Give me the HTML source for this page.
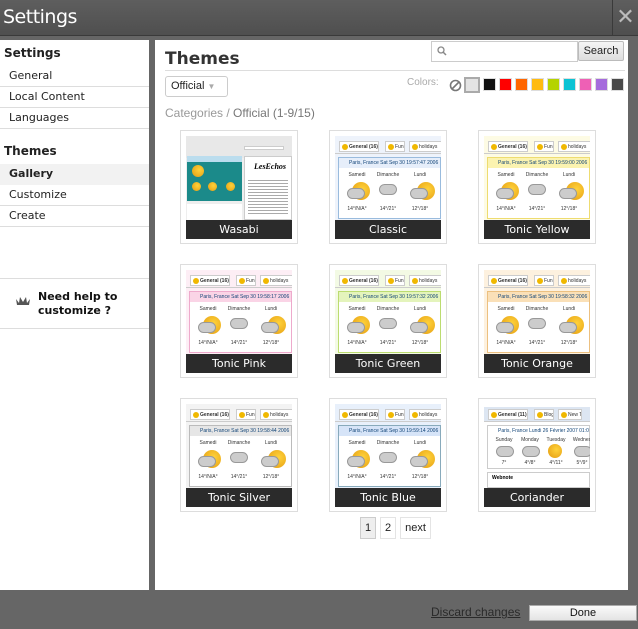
<!DOCTYPE html>
<html><head><meta charset="utf-8"><style>
*{margin:0;padding:0;box-sizing:border-box}
body{width:638px;height:629px;overflow:hidden;background:#666;font-family:"Liberation Sans","DejaVu Sans",sans-serif;position:relative}
.top{position:absolute;left:0;top:0;width:638px;height:36px;background:linear-gradient(#5e5e5e,#4f4f4f);border-bottom:1px solid #3a3a3a}
.top h1{position:absolute;left:3px;top:6px;color:#fff;font-size:19px;font-weight:normal;font-family:"DejaVu Sans",sans-serif;letter-spacing:-0.5px}
.close{position:absolute;left:612px;top:0;width:26px;height:36px;border-left:1px solid #3a3a3a;color:#bbb;font-size:22px;text-align:center;line-height:34px}
.side{position:absolute;left:0;top:40px;width:149px;height:550px;background:#fff}
.div{position:absolute;left:149px;top:40px;width:6px;height:550px;background:#666}
.main{position:absolute;left:155px;top:40px;width:473px;height:550px;background:#fff}
.side .h{font-size:12px;font-weight:bold;color:#222;padding-left:4px;font-family:"DejaVu Sans",sans-serif}
.side .it{font-size:11px;color:#222;padding-left:9px;height:21px;line-height:20px;border-bottom:1px solid #ddd;font-family:"DejaVu Sans",sans-serif}
.ab{position:absolute}
.thumb{position:absolute;width:118px;height:114px;border:1px solid #ddd;background:#fff}
.thumb .img{position:absolute;left:5px;top:5px;width:106px;height:84px;overflow:hidden;background:#fff}
.thumb .lab{position:absolute;left:5px;top:89px;width:106px;height:19px;background:#2b2b2b;color:#fff;font-size:11px;text-align:center;line-height:19px;font-family:"DejaVu Sans",sans-serif}
.tabs{position:absolute;left:0;top:3px;width:106px;height:15px;border-bottom:1px solid #ccc}
.tab{position:absolute;top:2px;height:11px;border:1px solid #ccc;background:#fff;font-size:5px;line-height:10px;padding-left:9px;color:#333;white-space:nowrap;overflow:hidden}
.tab:before{content:"";position:absolute;left:2px;top:2px;width:6px;height:6px;border-radius:3px;background:#f0b800}
.pan{position:absolute;left:3px;top:21px;width:103px;height:62px;border:1px solid #bbb;background:#fff}
.ph{height:10px;font-size:5px;color:#147;line-height:10px;padding-left:10px;white-space:nowrap;overflow:hidden}
.d{position:absolute;top:14px;width:24px;font-size:5px;text-align:center;color:#333}
.sun{position:absolute;top:24px;width:18px;height:18px;border-radius:9px;background:radial-gradient(circle at 60% 40%,#ffd23a,#e39a10)}
.cl{position:absolute;top:30px;width:18px;height:11px;border-radius:6px;background:#ccc;border:1px solid #999}
.t{position:absolute;top:48px;width:24px;font-size:5px;text-align:center;color:#333}
.sw{position:absolute;top:78px;width:13px;height:13px;border:1px solid #ddd}
.pg{position:absolute;top:517px;height:22px;border:1px solid #e4e4e4;font-size:11px;text-align:center;line-height:20px;color:#222}
</style></head><body>
<div class="top"><h1>Settings</h1><div class="close">✕</div></div>
<div class="side">
<div class="h" style="margin-top:6px;height:20px">Settings</div>
<div class="it">General</div><div class="it">Local Content</div><div class="it">Languages</div>
<div class="h" style="margin-top:15px;height:20px">Themes</div>
<div class="it" style="background:#f2f2f2;font-weight:bold;border:none">Gallery</div>
<div class="it">Customize</div><div class="it">Create</div>
<div style="position:absolute;top:238px;left:0;width:149px;height:51px;border-top:1px solid #ddd;border-bottom:1px solid #ddd">
<svg class="ab" style="left:15px;top:17px" width="16" height="10"><path d="M1 3 L4 7 L5 1 L8 6 L11 1 L12 7 L15 3 L14 9 L2 9Z" fill="#555"/></svg>
<div class="ab" style="left:38px;top:11px;font-size:11px;font-weight:bold;color:#111;line-height:14px;font-family:'DejaVu Sans',sans-serif">Need help to<br>customize ?</div></div>
</div>
<div class="div"></div>
<div class="main">
<div class="ab" style="left:10px;top:9px;font-size:17px;font-weight:bold;color:#333;font-family:'DejaVu Sans',sans-serif">Themes</div>
<div class="ab" style="left:10px;top:30px;width:460px;height:1px;background:#ddd"></div>
<div class="ab" style="left:276px;top:1px;width:147px;height:21px;border:1px solid #ccc;background:#fff"><svg class="ab" style="left:5px;top:4px" width="10" height="10"><circle cx="4" cy="4" r="3" fill="none" stroke="#888" stroke-width="1.3"/><path d="M6 6 L9 9" stroke="#888" stroke-width="1.5"/></svg></div>
<div class="ab" style="left:423px;top:1px;width:46px;height:20px;border:1px solid #bbb;border-radius:2px;background:linear-gradient(#f5f5f5,#ddd);font-size:11px;text-align:center;line-height:18px;color:#222">Search</div>
<div class="ab" style="left:10px;top:36px;width:63px;height:21px;border:1px solid #ccc;border-radius:3px;font-size:11px;line-height:19px;padding-left:5px;color:#222">Official <span style="color:#aaa;font-size:8px">▼</span></div>
<div class="ab" style="left:252px;top:37px;font-size:10px;color:#aaa">Colors:</div>
<div class="ab" style="left:10px;top:66px;font-size:12px;color:#999">Categories / <span style="color:#777">Official (1-9/15)</span></div>
</div>
<svg class="ab" style="left:449px;top:79px" width="13" height="13"><circle cx="6.5" cy="6.5" r="5" fill="none" stroke="#777" stroke-width="1.6"/><path d="M3 10 L10 3" stroke="#777" stroke-width="1.6"/></svg>
<div class="sw" style="left:464px;width:16px;height:16px;top:77px;border:2px solid #aaa;background:#e4e4e4"></div>
<div class="sw" style="left:483px;background:#111"></div>
<div class="sw" style="left:499px;background:#f00"></div>
<div class="sw" style="left:515px;background:#f60"></div>
<div class="sw" style="left:531px;background:#fb1"></div>
<div class="sw" style="left:547px;background:#b5d300"></div>
<div class="sw" style="left:563px;background:#0bc3d4"></div>
<div class="sw" style="left:579px;background:#ee60b5"></div>
<div class="sw" style="left:595px;background:#a56bdc"></div>
<div class="sw" style="left:611px;background:#4a4a4a"></div>

<div class="thumb" style="left:180px;top:130px"><div class="img" style="background:#eee">
<div class="ab" style="left:0;top:0;width:106px;height:22px;background:#e8e8e8"></div>
<div class="ab" style="left:58px;top:10px;width:40px;height:4px;background:#fff;border:1px solid #ccc"></div>
<div class="ab" style="left:1px;top:25px;width:55px;height:40px;background:#1b8a8a"></div>
<div class="ab" style="left:1px;top:20px;width:55px;height:6px;background:#bde"></div>
<div class="sun" style="left:6px;top:29px;width:12px;height:12px"></div>
<div class="sun" style="left:6px;top:46px;width:9px;height:9px"></div><div class="sun" style="left:22px;top:46px;width:9px;height:9px"></div><div class="sun" style="left:40px;top:46px;width:9px;height:9px"></div>
<div class="ab" style="left:1px;top:68px;width:55px;height:16px;background:#fff"></div>
<div class="ab" style="left:58px;top:20px;width:48px;height:64px;background:#fff;border:1px solid #ccc"></div>
<div class="ab" style="left:68px;top:26px;font-size:8px;font-style:italic;font-weight:bold;font-family:'Liberation Serif',serif">LesEchos</div>
<div class="ab" style="left:62px;top:42px;width:40px;height:38px;background:repeating-linear-gradient(#fff 0 2px,#aaa 2px 3px)"></div>
</div><div class="lab">Wasabi</div></div>

<div class="thumb" style="left:329px;top:130px"><div class="img" style="background:#eef3fb">
<div class="tabs"><div class="tab" style="left:4px;width:40px;font-weight:bold">General (16)</div><div class="tab" style="left:50px;width:20px">Fun</div><div class="tab" style="left:74px;width:34px">holidays</div></div>
<div class="pan" style="border-color:#9bd"><div class="ph" style="background:#e6eefa">Paris, France Sat Sep 30 19:57:47 2006</div>
<div class="d" style="left:6px">Samedi</div><div class="d" style="left:37px">Dimanche</div><div class="d" style="left:69px">Lundi</div>
<div class="sun" style="left:13px"></div><div class="cl" style="left:8px"></div><div class="cl" style="left:40px;top:26px"></div><div class="sun" style="left:78px"></div><div class="cl" style="left:71px"></div>
<div class="t" style="left:6px">14°/N/A°</div><div class="t" style="left:37px">14°/21°</div><div class="t" style="left:69px">12°/18°</div></div>
</div><div class="lab">Classic</div></div>

<div class="thumb" style="left:478px;top:130px"><div class="img" style="background:#fdfbe4">
<div class="tabs"><div class="tab" style="left:4px;width:40px;font-weight:bold">General (16)</div><div class="tab" style="left:50px;width:20px">Fun</div><div class="tab" style="left:74px;width:34px">holidays</div></div>
<div class="pan" style="border-color:#eedc70"><div class="ph" style="background:#fbf3b0">Paris, France Sat Sep 30 19:59:00 2006</div>
<div class="d" style="left:6px">Samedi</div><div class="d" style="left:37px">Dimanche</div><div class="d" style="left:69px">Lundi</div>
<div class="sun" style="left:13px"></div><div class="cl" style="left:8px"></div><div class="cl" style="left:40px;top:26px"></div><div class="sun" style="left:78px"></div><div class="cl" style="left:71px"></div>
<div class="t" style="left:6px">14°/N/A°</div><div class="t" style="left:37px">14°/21°</div><div class="t" style="left:69px">12°/18°</div></div>
</div><div class="lab">Tonic Yellow</div></div>

<div class="thumb" style="left:180px;top:264px"><div class="img" style="background:#fdeef5">
<div class="tabs"><div class="tab" style="left:4px;width:40px;font-weight:bold">General (16)</div><div class="tab" style="left:50px;width:20px">Fun</div><div class="tab" style="left:74px;width:34px">holidays</div></div>
<div class="pan" style="border-color:#eeaacc"><div class="ph" style="background:#fad4e6">Paris, France Sat Sep 30 19:58:17 2006</div>
<div class="d" style="left:6px">Samedi</div><div class="d" style="left:37px">Dimanche</div><div class="d" style="left:69px">Lundi</div>
<div class="sun" style="left:13px"></div><div class="cl" style="left:8px"></div><div class="cl" style="left:40px;top:26px"></div><div class="sun" style="left:78px"></div><div class="cl" style="left:71px"></div>
<div class="t" style="left:6px">14°/N/A°</div><div class="t" style="left:37px">14°/21°</div><div class="t" style="left:69px">12°/18°</div></div>
</div><div class="lab">Tonic Pink</div></div>

<div class="thumb" style="left:329px;top:264px"><div class="img" style="background:#f3fae4">
<div class="tabs"><div class="tab" style="left:4px;width:40px;font-weight:bold">General (16)</div><div class="tab" style="left:50px;width:20px">Fun</div><div class="tab" style="left:74px;width:34px">holidays</div></div>
<div class="pan" style="border-color:#bcdc70"><div class="ph" style="background:#e4f4bc">Paris, France Sat Sep 30 19:57:32 2006</div>
<div class="d" style="left:6px">Samedi</div><div class="d" style="left:37px">Dimanche</div><div class="d" style="left:69px">Lundi</div>
<div class="sun" style="left:13px"></div><div class="cl" style="left:8px"></div><div class="cl" style="left:40px;top:26px"></div><div class="sun" style="left:78px"></div><div class="cl" style="left:71px"></div>
<div class="t" style="left:6px">14°/N/A°</div><div class="t" style="left:37px">14°/21°</div><div class="t" style="left:69px">12°/18°</div></div>
</div><div class="lab">Tonic Green</div></div>

<div class="thumb" style="left:478px;top:264px"><div class="img" style="background:#fdf1df">
<div class="tabs"><div class="tab" style="left:4px;width:40px;font-weight:bold">General (16)</div><div class="tab" style="left:50px;width:20px">Fun</div><div class="tab" style="left:74px;width:34px">holidays</div></div>
<div class="pan" style="border-color:#ecc080"><div class="ph" style="background:#fae0b8">Paris, France Sat Sep 30 19:58:32 2006</div>
<div class="d" style="left:6px">Samedi</div><div class="d" style="left:37px">Dimanche</div><div class="d" style="left:69px">Lundi</div>
<div class="sun" style="left:13px"></div><div class="cl" style="left:8px"></div><div class="cl" style="left:40px;top:26px"></div><div class="sun" style="left:78px"></div><div class="cl" style="left:71px"></div>
<div class="t" style="left:6px">14°/N/A°</div><div class="t" style="left:37px">14°/21°</div><div class="t" style="left:69px">12°/18°</div></div>
</div><div class="lab">Tonic Orange</div></div>

<div class="thumb" style="left:180px;top:398px"><div class="img" style="background:#f3f3f3">
<div class="tabs"><div class="tab" style="left:4px;width:40px;font-weight:bold">General (16)</div><div class="tab" style="left:50px;width:20px">Fun</div><div class="tab" style="left:74px;width:34px">holidays</div></div>
<div class="pan" style="border-color:#bbb"><div class="ph" style="background:#e6e6e6">Paris, France Sat Sep 30 19:58:44 2006</div>
<div class="d" style="left:6px">Samedi</div><div class="d" style="left:37px">Dimanche</div><div class="d" style="left:69px">Lundi</div>
<div class="sun" style="left:13px"></div><div class="cl" style="left:8px"></div><div class="cl" style="left:40px;top:26px"></div><div class="sun" style="left:78px"></div><div class="cl" style="left:71px"></div>
<div class="t" style="left:6px">14°/N/A°</div><div class="t" style="left:37px">14°/21°</div><div class="t" style="left:69px">12°/18°</div></div>
</div><div class="lab">Tonic Silver</div></div>

<div class="thumb" style="left:329px;top:398px"><div class="img" style="background:#e8f0fb">
<div class="tabs"><div class="tab" style="left:4px;width:40px;font-weight:bold">General (16)</div><div class="tab" style="left:50px;width:20px">Fun</div><div class="tab" style="left:74px;width:34px">holidays</div></div>
<div class="pan" style="border-color:#8ab"><div class="ph" style="background:#d6e4f8">Paris, France Sat Sep 30 19:59:14 2006</div>
<div class="d" style="left:6px">Samedi</div><div class="d" style="left:37px">Dimanche</div><div class="d" style="left:69px">Lundi</div>
<div class="sun" style="left:13px"></div><div class="cl" style="left:8px"></div><div class="cl" style="left:40px;top:26px"></div><div class="sun" style="left:78px"></div><div class="cl" style="left:71px"></div>
<div class="t" style="left:6px">14°/N/A°</div><div class="t" style="left:37px">14°/21°</div><div class="t" style="left:69px">12°/18°</div></div>
</div><div class="lab">Tonic Blue</div></div>

<div class="thumb" style="left:478px;top:398px"><div class="img" style="background:#fff">
<div class="tabs" style="background:#dde6f2"><div class="tab" style="left:4px;width:40px;font-weight:bold">General (11)</div><div class="tab" style="left:50px;width:20px">Blogs</div><div class="tab" style="left:74px;width:24px">New Tab</div></div>
<div class="pan" style="border-color:#ccc;height:44px"><div class="ph">Paris, France Lundi 26 Février 2007 01:09:31</div>
<div class="d" style="left:4px;top:11px">Sunday</div><div class="d" style="left:30px;top:11px">Monday</div><div class="d" style="left:56px;top:11px">Tuesday</div><div class="d" style="left:82px;top:11px">Wednes</div>
<div class="cl" style="left:8px;top:20px"></div><div class="cl" style="left:34px;top:20px"></div><div class="sun" style="left:60px;top:18px;width:14px;height:14px"></div><div class="cl" style="left:86px;top:20px"></div>
<div class="t" style="left:4px;top:34px">7°</div><div class="t" style="left:30px;top:34px">4°/8°</div><div class="t" style="left:56px;top:34px">4°/11°</div><div class="t" style="left:82px;top:34px">5°/9°</div></div>
<div class="ab" style="left:3px;top:68px;width:103px;height:16px;border:1px solid #ccc;font-size:5px;padding:2px 4px;font-weight:bold">Webnote</div>
</div><div class="lab">Coriander</div></div>

<div class="pg" style="left:360px;width:16px;background:#eee;border-color:#ccc">1</div>
<div class="pg" style="left:380px;width:16px">2</div>
<div class="pg" style="left:400px;width:31px">next</div>

<div class="ab" style="left:431px;top:605px;font-size:12px;color:#2a2a2a;text-decoration:underline">Discard changes</div>
<div class="ab" style="left:529px;top:605px;width:108px;height:16px;border:1px solid #aaa;background:linear-gradient(#fafafa,#e4e4e4);font-size:11px;text-align:center;line-height:14px;color:#111">Done</div>
</body></html>
